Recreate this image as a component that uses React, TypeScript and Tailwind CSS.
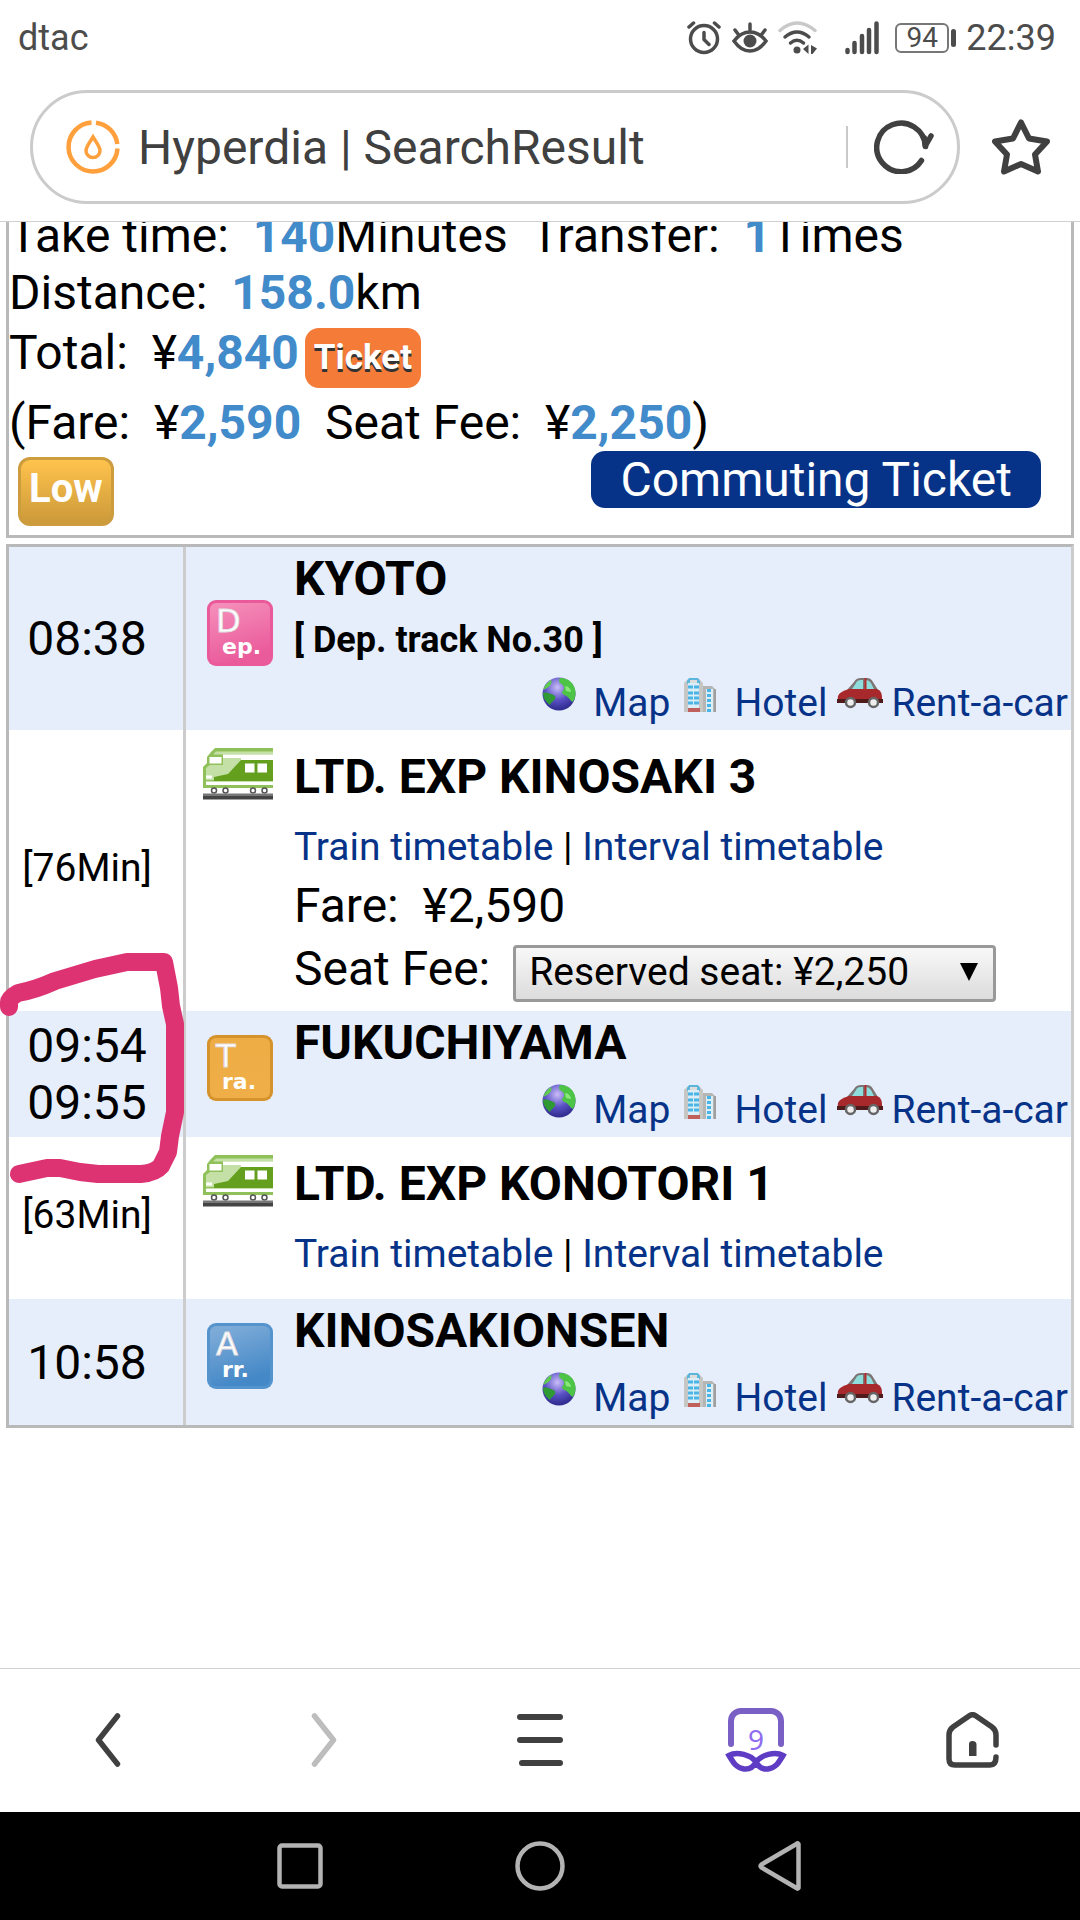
import { useState } from "react";

type Stop = {
  kind: "stop";
  times: string[];
  badge: "dep" | "tra" | "arr";
  name: string;
  track?: string;
};

type Leg = {
  kind: "leg";
  minutes: number;
  name: string;
  fare?: string;
  seats?: string[];
};

const route: (Stop | Leg)[] = [
  {
    kind: "stop",
    times: ["08:38"],
    badge: "dep",
    name: "KYOTO",
    track: "[ Dep. track No.30 ]",
  },
  {
    kind: "leg",
    minutes: 76,
    name: "LTD. EXP KINOSAKI 3",
    fare: "¥2,590",
    seats: ["Reserved seat: ¥2,250"],
  },
  {
    kind: "stop",
    times: ["09:54", "09:55"],
    badge: "tra",
    name: "FUKUCHIYAMA",
  },
  { kind: "leg", minutes: 63, name: "LTD. EXP KONOTORI 1" },
  { kind: "stop", times: ["10:58"], badge: "arr", name: "KINOSAKIONSEN" },
];

const badgeConfig = {
  dep: { big: "D", small: "ep.", from: "#f48bb8", to: "#ea5b9b", edge: "#ea5a9a" },
  tra: { big: "T", small: "ra.", from: "#eeac45", to: "#efae47", edge: "#d6932b" },
  arr: { big: "A", small: "rr.", from: "#7dabd8", to: "#4488c7", edge: "#5593cd" },
};

const StopBadge = ({ type }: { type: Stop["badge"] }) => {
  const { big, small, from, to, edge } = badgeConfig[type];

  return (
    <svg viewBox="0 0 66 66" className="w-[66px] h-[66px]">
      <defs>
        <linearGradient id={`badge-${type}`} x1="0" y1="0" x2="0.3" y2="1">
          <stop offset="0.1" stopColor={from} />
          <stop offset="1" stopColor={to} />
        </linearGradient>
      </defs>
      <rect width="66" height="66" rx="9" fill={edge} />
      <rect x="3" y="3" width="60" height="60" rx="6" fill={`url(#badge-${type})`} />
      <g fontFamily="DejaVu Sans, sans-serif" fill="#fff">
        <text x="9" y="32" fontSize="32" stroke="#e4dfe2" strokeWidth="1">{big}</text>
        <text x="15" y="54" fontSize="22" fontWeight="700">{small}</text>
      </g>
    </svg>
  );
};

const TrainIcon = () => (
  <svg viewBox="0 0 70 52" className="w-[70px] h-[52px]">
    <path d="M12 0h58v40H0V19l4-4V9l4-5z" fill="#8fc05a" />
    <path d="M13 3.5h57v3H10z" fill="#c5e0a6" />
    <path d="M20 6.5h50v5.5H20z" fill="#fff" />
    <path d="M20 10h18v22H3V20l4-3h13z" fill="#c5e0a6" />
    <path d="M38 12h32v21H11v-4l14-3z" fill="#64a01e" />
    <rect x="6.5" y="9" width="12" height="6.5" fill="#fff" />
    <rect x="42" y="15.5" width="9.5" height="9" fill="#fff" />
    <rect x="54.5" y="15.5" width="9.5" height="9" fill="#fff" />
    <rect x="3" y="27.5" width="6" height="3" fill="#fff" />
    <path d="M3 33.5h67v3.5H3z" fill="#fff" />
    <g fill="#fff" stroke="#555" strokeWidth="1.5">
      <circle cx="11" cy="42.5" r="2.5" />
      <circle cx="22.5" cy="42.5" r="2.5" />
      <circle cx="50" cy="42.5" r="2.5" />
      <circle cx="61.5" cy="42.5" r="2.5" />
    </g>
    <rect y="45.5" width="70" height="3" fill="#777" />
    <rect y="48" width="70" height="3.5" fill="#444" />
  </svg>
);

const GlobeIcon = () => (
  <svg viewBox="0 0 36 36" className="w-9 h-9">
    <defs>
      <radialGradient id="globe-sea" cx="0.45" cy="0.3" r="0.7">
        <stop offset="0" stopColor="#c9bdf8" />
        <stop offset="0.55" stopColor="#5a50c4" />
        <stop offset="1" stopColor="#2d2a8c" />
      </radialGradient>
    </defs>
    <circle cx="18" cy="18" r="16.5" fill="url(#globe-sea)" />
    <path d="M19 2c9 0 15 6 15.5 14 0 5-1 8-3 10-2-1-3-4-6-6-4-2-6-3-3-6 2-3-1-6-4-7 0-2-1-3 .5-5z" fill="#4dc445" />
    <path d="M10 4C5 7 3 11 2.5 14l5-3c2-2 4-4 2.500-7z" fill="#5fca50" />
    <path d="M2 17c3-1 5 0 8 1 4 1 5 3 4 5s-4 3-5 6c-4-3-7-7-7-12z" fill="#2f9a34" />
    <path d="M24 10c3 0 6 3 6 6l-5-1z" fill="#8ae87b" />
  </svg>
);

const HotelIcon = () => (
  <svg viewBox="0 0 36 38" className="w-9 h-[38px]">
    <path d="M2 7l4-4h11l4 4v29H2z" fill="#c6c6c4" />
    <path d="M21 10h9l4 4v22H21z" fill="#b5b5b3" />
    <path d="M5 5l2-3h9l2 3v3H5z" fill="#5bb5dc" />
    <path d="M8 4h7v3H8z" fill="#ddd" />
    <path d="M6 7h11v25H6z" fill="#d9eef7" />
    <path d="M6 11h11M6 17h11M6 22h11M6 27h11" stroke="#4bb4e6" strokeWidth="3" strokeDasharray="5 1" />
    <path d="M24 13h7v23h-7z" fill="#dceef5" />
    <path d="M27 13v23" stroke="#4bb4e6" strokeWidth="4" strokeDasharray="3 2" />
    <path d="M6 32h12v4H6z" fill="#c0605c" />
    <path d="M33 13v23" stroke="#999" strokeWidth="1.5" />
  </svg>
);

const CarIcon = () => (
  <svg viewBox="0 0 46 34" className="w-[46px] h-[34px]">
    <path d="M10 14l7-8q2-4 7-4h6q4 0 6 4l5 8z" fill="#7d7474" />
    <path d="M1 20q1-4 11-7h28q5 2 5 8v6H3q-3-3-2-7z" fill="#a8292b" />
    <path d="M15 13l4-6q1-3 5-3h2v9zM29 4q3 0 5 3l3 6h-8z" fill="#8fdcdc" />
    <path d="M28.500 2v12" stroke="#b52a2c" strokeWidth="2" />
    <path d="M0 23h46v4H0z" fill="#4f1a1a" />
    <circle cx="13.5" cy="26.5" r="4.5" fill="#eee" stroke="#666" strokeWidth="2.5" />
    <circle cx="36.5" cy="26.5" r="4.5" fill="#eee" stroke="#666" strokeWidth="2.5" />
  </svg>
);

const StatusBar = () => (
  <div className="flex items-center justify-between h-[90px] pb-[15px] pl-[18px] pr-6 text-4xl leading-[42px] text-[#4c4c4c]">
    <span>dtac</span>
    <div className="flex items-center">
      <svg viewBox="0 0 34 34" className="w-[34px] h-[34px]" fill="none" stroke="currentColor" strokeWidth="3.5" strokeLinecap="round" strokeLinejoin="round">
        <circle cx="17" cy="18" r="13.5" />
        <path d="M17 11.5v7l5 5M2 6l4.500-4M32 6l-4.500-4" />
      </svg>
      <svg viewBox="0 0 36 32" className="ml-[11px] w-9 h-8" fill="none" stroke="currentColor" strokeWidth="3.5" strokeLinecap="round">
        <path d="M2 19q7-9 16-9t16 9q-7 10-16 10T2 19zM18 2v6M3 8l3 4M33 8l-3 4" />
        <circle cx="18" cy="19" r="6.5" fill="currentColor" stroke="none" />
      </svg>
      <svg viewBox="0 0 40 34" className="ml-[10px] w-10 h-[34px]" fill="none" stroke="currentColor" strokeWidth="3.5" strokeLinecap="round">
        <path d="M2 9.500Q19-5.500 37 9.500" stroke="#c9c9c9" />
        <path d="M7 16q12-10 24 0M12.500 22q6.500-5.500 13 0" />
        <circle cx="19" cy="29" r="3.5" fill="currentColor" stroke="none" />
        <path d="M25 28l5.500-4.500V33zM33 24l6 3.500-4.500 5.500H33z" fill="currentColor" stroke="none" />
      </svg>
      <svg viewBox="0 0 34 34" className="ml-[27px] w-[34px] h-[34px]" stroke="currentColor" strokeWidth="4.5" strokeLinecap="round">
        <path d="M2.500 29v2M9.500 22v9M17 15v16M24 9v22M31.500 2.500v28.500" />
      </svg>
      <span className="ml-4 flex items-center justify-center w-[54px] h-[30px] border-2 border-[#777] rounded-md text-[28px] leading-[28px]">
        94
      </span>
      <span className="ml-[2px] w-[5px] h-[18px] rounded-sm bg-[#4c4c4c]" />
      <span className="ml-[10px]">22:39</span>
    </div>
  </div>
);

const AddressBar = () => (
  <div className="flex items-center px-[30px] pb-[17px]">
    <div className="flex flex-1 items-center h-[114px] pl-[33px] pr-[22px] border-[3px] border-[#cbcbcb] rounded-full">
      <svg viewBox="0 0 54 54" className="shrink-0 w-[54px] h-[54px]" fill="none" stroke="#ffa03c" strokeWidth="4.5">
        <path d="M25.5 2.5A24.5 24.5 0 1 0 51.5 28.5M30 2.7A24.5 24.5 0 0 1 51.3 24" />
        <path d="M27 17c-3 5-7 9.5-7 13.5a7 7 0 0 0 14 0c0-4-4-8.500-7-13.500z" strokeWidth="3.5" />
      </svg>
      <span className="flex-1 ml-[18px] text-5xl leading-[57px] text-[#404040]">
        Hyperdia | SearchResult
      </span>
      <button type="button" aria-label="Reload" className="flex items-center">
        <span className="w-[2px] h-[42px] mr-[26px] bg-[#c9c9c9]" />
        <svg viewBox="0 0 61 54" className="w-[61px] h-[54px]" fill="none" stroke="#404040" strokeWidth="5.5" strokeLinecap="round" strokeLinejoin="round">
          <path d="M47.5 40.5A24.3 24.3 0 1 1 51.3 26L57 16" />
          <path d="M50.5 18l1 8.5" />
        </svg>
      </button>
    </div>
    <button type="button" aria-label="Bookmark" className="ml-8">
      <svg viewBox="0 0 58 56" className="w-[58px] h-14" fill="none" stroke="#404040" strokeWidth="6" strokeLinejoin="round">
        <path d="M29 3.5L37 19.5 55 22.5 43 35.5 46 52.5 29 45 12 52.5 15 35.5 3 22.5 21 19.5z" />
      </svg>
    </button>
  </div>
);

const Amount = ({ children }: { children: string }) => (
  <b className="font-bold text-[#428bca]">{children}</b>
);

const Summary = () => (
  <section className="-mt-[15px] mx-[6px] border-[3px] border-t-0 border-[#b9b9b9] text-5xl leading-[57px] whitespace-pre">
    <p>
      Take time:{"  "}
      <Amount>140</Amount>Minutes{"  "}Transfer:{"  "}
      <Amount>1</Amount>Times
    </p>
    <p>
      Distance:{"  "}
      <Amount>158.0</Amount>km
    </p>
    <div className="flex items-baseline pt-[3px] pb-[6px]">
      <p>
        Total:{"  "}¥<Amount>4,840</Amount>
      </p>
      <a
        href="#ticket"
        className="ml-[6px] px-[9px] rounded-[14px] bg-[#f47b38] text-[35px] leading-[60px] font-bold text-white [text-shadow:0_3px_0_#333]"
      >
        Ticket
      </a>
    </div>
    <p>
      (Fare:{"  "}¥<Amount>2,590</Amount>
      {"  "}Seat Fee:{"  "}¥<Amount>2,250</Amount>)
    </p>
    <div className="flex items-start justify-between pl-[9px] pr-[30px] pb-[9px]">
      <span className="mt-[6px] h-[69px] px-2 pt-[5px] border-[3px] border-[#cc9c3e] rounded-xl bg-linear-to-b from-[#ffc34d] to-[#cc9a3a] text-[40px] leading-[48px] font-bold text-white">
        Low
      </span>
      <a href="#commuting" className="px-[29px] rounded-[14px] bg-[#063388] text-white">
        Commuting Ticket
      </a>
    </div>
  </section>
);

const StopDetails = ({ stop }: { stop: Stop }) => (
  <div className="pt-[3px]">
    <h2 className="text-5xl leading-[57px] font-bold">{stop.name}</h2>
    {stop.track && (
      <p className="mt-3 mb-[15px] text-4xl leading-[42px] font-bold">{stop.track}</p>
    )}
    <div
      className={`flex justify-end pr-[3px] text-[39px] leading-[54px] text-[#063388] ${
        stop.track ? "" : "mt-3"
      }`}
    >
      <a href="#map" className="flex">
        <GlobeIcon />
        <span className="ml-4">Map</span>
      </a>
      <a href="#hotel" className="flex ml-3">
        <HotelIcon />
        <span className="ml-4">Hotel</span>
      </a>
      <a href="#car" className="flex ml-[10px]">
        <CarIcon />
        <span className="ml-2">Rent-a-car</span>
      </a>
    </div>
  </div>
);

const LegDetails = ({ leg }: { leg: Leg }) => {
  const [seat, setSeat] = useState(leg.seats?.[0] ?? "");

  return (
    <div className={`pt-[18px] ${leg.seats ? "pb-[9px]" : "pb-[19px]"}`}>
      <h2 className="text-5xl leading-[57px] font-bold">{leg.name}</h2>
      <p className="mt-4 text-[39px] leading-[52px]">
        <a href="#train" className="text-[#063388]">Train timetable</a> |{" "}
        <a href="#interval" className="text-[#063388]">Interval timetable</a>
      </p>
      {leg.fare && (
        <p className="mt-1 text-5xl leading-[57px] whitespace-pre">Fare:{"  "}{leg.fare}</p>
      )}
      {leg.seats && (
        <div className="mt-[6px] flex items-baseline">
          <label htmlFor="seat" className="text-5xl leading-[57px]">Seat Fee:</label>
          <div className="relative ml-[23px] w-[483px]">
            <select
              id="seat"
              value={seat}
              onChange={(e) => setSeat(e.target.value)}
              className="block appearance-none w-full h-[57px] pl-[13px] pb-[6px] border-[3px] border-[#999] rounded-sm bg-linear-to-b from-[#f8f8f8] to-[#dcdcdc] text-[39px] leading-[48px] text-black"
            >
              {leg.seats.map((s) => (
                <option key={s}>{s}</option>
              ))}
            </select>
            <svg viewBox="0 0 18 18" className="absolute right-[18px] top-[18px] w-[18px] h-[18px] pointer-events-none">
              <path d="M0 0h18L9 18z" />
            </svg>
          </div>
        </div>
      )}
    </div>
  );
};

const RouteTable = () => (
  <div className="relative mt-[6px] px-[6px]">
    <table className="w-full border-separate border-spacing-0 border-[3px] border-[#b9b9b9] border-r-[#ccc]">
      <tbody>
        {route.map((row) => (
          <tr key={row.name} className={row.kind === "stop" ? "bg-[#e6edfb]" : "bg-white"}>
            <td className="w-[177px] border-r-[3px] border-[#ccc] pr-[18px] text-center align-middle">
              {row.kind === "stop" ? (
                row.times.map((t) => (
                  <time key={t} className="block text-5xl leading-[57px]">{t}</time>
                ))
              ) : (
                <span className="block pb-[6px] text-[39px] leading-[48px]">[{row.minutes}Min]</span>
              )}
            </td>
            {row.kind === "stop" ? (
              <td className="w-[108px] pr-[21px] pb-3 align-middle">
                <div className="flex justify-end">
                  <StopBadge type={row.badge} />
                </div>
              </td>
            ) : (
              <td className="w-[108px] pr-[21px] pt-[18px] align-top">
                <div className="flex justify-end">
                  <TrainIcon />
                </div>
              </td>
            )}
            <td className="align-top">
              {row.kind === "stop" ? <StopDetails stop={row} /> : <LegDetails leg={row} />}
            </td>
          </tr>
        ))}
      </tbody>
    </table>
    {/* marker stroke around the transfer times */}
    <svg
      viewBox="0 0 190 250"
      className="absolute left-0 top-[400px] w-[190px] h-[250px] pointer-events-none"
      fill="none"
      stroke="#dd3373"
      strokeWidth="18"
      strokeLinecap="round"
      strokeLinejoin="round"
    >
      <path d="M9 63V58Q9 54 18 49Q35 46 55 37L95 25 127 18H164L169 44 171 62 175 80V168L170 192 168 208 161 222Q155 229 141 230H98L80 228 60 224H47L19 230" />
    </svg>
  </div>
);

const BrowserNav = () => (
  <nav className="grid grid-cols-5 h-36 pb-[2px] border-t border-[#d0d0d0] bg-white text-[#404040]">
    <button type="button" aria-label="Back" className="flex items-center justify-center">
      <svg viewBox="0 0 26 54" className="w-[26px] h-[54px]" fill="none" stroke="currentColor" strokeWidth="5.5" strokeLinecap="round" strokeLinejoin="round">
        <path d="M22.5 3L3.500 27l19 24" />
      </svg>
    </button>
    <button type="button" aria-label="Forward" className="flex items-center justify-center text-[#bdbdbd]">
      <svg viewBox="0 0 26 54" className="w-[26px] h-[54px]" fill="none" stroke="currentColor" strokeWidth="5.5" strokeLinecap="round" strokeLinejoin="round">
        <path d="M3.500 3l19 24-19 24" />
      </svg>
    </button>
    <button type="button" aria-label="Menu" className="flex items-center justify-center">
      <svg viewBox="0 0 46 52" className="w-[46px] h-[52px]" fill="none" stroke="currentColor" strokeWidth="6" strokeLinecap="round">
        <path d="M3 3h40M3 26h40M5 49h38" />
      </svg>
    </button>
    <button type="button" aria-label="Tabs" className="flex items-center justify-center">
      <svg viewBox="0 0 62 64" className="w-[62px] h-16" fill="none" strokeLinecap="round">
        <path d="M6 36V13a10 10 0 0 1 10-10h30a10 10 0 0 1 10 10v23" stroke="#7a5fc5" strokeWidth="6" />
        <text x="31" y="42" textAnchor="middle" fontSize="28" fill="#8f6cf0" fontFamily="Noto Sans, sans-serif">9</text>
        <path d="M4 47.5C12 43 26 47 31 54C28 60 24 61.500 19 61C11 60 8 54 4 47.500zM58 47.500C50 43 36 47 31 54C34 60 38 61.500 43 61C51 60 54 54 58 47.500z" stroke="#5f3cc4" strokeWidth="5.5" strokeLinecap="butt" />
      </svg>
    </button>
    <button type="button" aria-label="Home" className="flex items-center justify-center">
      <svg viewBox="0 0 53 56" className="w-[53px] h-14" fill="none" stroke="currentColor" strokeWidth="5.5" strokeLinecap="round">
        <path d="M50 33V23q0-5-4-8L30 4q-3.500-2.500-7 0L7 15q-4 3-4 8v24q0 6 6 6h35q6 0 6-8" />
        <path d="M23 44V32q0-3 3.500-3t4 3v12z" fill="currentColor" stroke="none" />
      </svg>
    </button>
  </nav>
);

const SystemNav = () => (
  <nav className="flex justify-center h-[108px] bg-black">
    <div className="grid grid-cols-3 w-2/3">
      <button type="button" aria-label="Recent apps" className="flex items-center justify-center">
        <svg viewBox="0 0 46 46" className="w-[46px] h-[46px]" fill="none" stroke="#b3b3b3" strokeWidth="4.5">
          <rect x="2.5" y="2.5" width="41" height="41" rx="2.5" />
        </svg>
      </button>
      <button type="button" aria-label="Home screen" className="flex items-center justify-center">
        <svg viewBox="0 0 50 50" className="w-[50px] h-[50px]" fill="none" stroke="#b3b3b3" strokeWidth="4.5">
          <circle cx="25" cy="25" r="22.5" />
        </svg>
      </button>
      <button type="button" aria-label="System back" className="flex items-center justify-center">
        <svg viewBox="0 0 44 50" className="w-11 h-[50px]" fill="none" stroke="#b3b3b3" strokeWidth="4.5" strokeLinejoin="round">
          <path d="M40.500 3v44q-1 1-2 0L3.500 26.500q-2-1.500 0-3L38.500 3q1-1 2 0z" />
        </svg>
      </button>
    </div>
  </nav>
);

export default function App() {
  return (
    <div className="flex flex-col min-h-screen bg-white text-black font-[Roboto,sans-serif]">
      <header className="border-b border-[#d0d0d0]">
        <StatusBar />
        <AddressBar />
      </header>
      <main className="flex-1 overflow-hidden">
        <Summary />
        <RouteTable />
      </main>
      <BrowserNav />
      <SystemNav />
    </div>
  );
}
